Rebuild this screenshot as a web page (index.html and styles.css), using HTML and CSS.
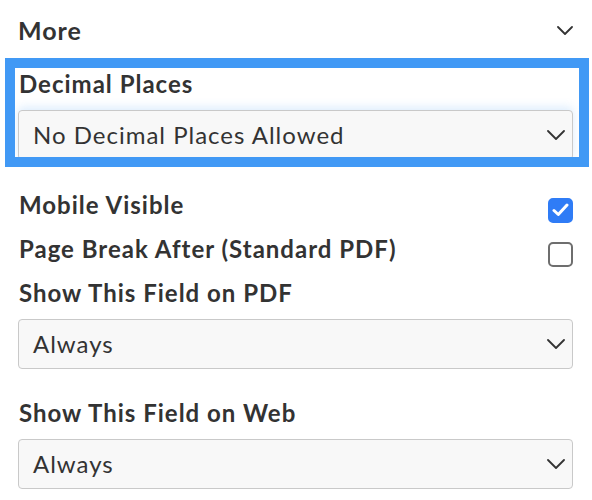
FILE: index.html
```html
<!DOCTYPE html>
<html>
<head>
<meta charset="utf-8">
<link rel="stylesheet" href="styles.css">
</head>
<body>
<div class="panel">
  <div class="section-head">
    <h2 class="section-title">More</h2>
    <svg class="head-chevron" width="16" height="9" viewBox="0 0 16 9"><path d="M1 1 L8 8 L15 1" fill="none" stroke="#333" stroke-width="1.8" stroke-linecap="round" stroke-linejoin="round"/></svg>
  </div>

  <div class="field field-focused">
    <div class="field-label">Decimal Places</div>
    <div class="select select-focused">
      <span>No Decimal Places Allowed</span>
      <svg class="select-chevron" width="18" height="10" viewBox="0 0 18 10"><path d="M1 1 L9 9 L17 1" fill="none" stroke="#333" stroke-width="1.8" stroke-linecap="round" stroke-linejoin="round"/></svg>
    </div>
  </div>

  <div class="check-row">
    <span class="check-label">Mobile Visible</span>
    <span class="checkbox checked"><svg width="17" height="14" viewBox="0 0 17 14"><path d="M2 7.5 L6.3 11.5 L15 2" fill="none" stroke="#fff" stroke-width="3" stroke-linecap="round" stroke-linejoin="round"/></svg></span>
  </div>
  <div class="check-row">
    <span class="check-label">Page Break After (Standard PDF)</span>
    <span class="checkbox"></span>
  </div>

  <div class="field field-pdf">
    <div class="field-label">Show This Field on PDF</div>
    <div class="select">
      <span>Always</span>
      <svg class="select-chevron" width="18" height="10" viewBox="0 0 18 10"><path d="M1 1 L9 9 L17 1" fill="none" stroke="#333" stroke-width="1.8" stroke-linecap="round" stroke-linejoin="round"/></svg>
    </div>
  </div>

  <div class="field field-web">
    <div class="field-label">Show This Field on Web</div>
    <div class="select">
      <span>Always</span>
      <svg class="select-chevron" width="18" height="10" viewBox="0 0 18 10"><path d="M1 1 L9 9 L17 1" fill="none" stroke="#333" stroke-width="1.8" stroke-linecap="round" stroke-linejoin="round"/></svg>
    </div>
  </div>
</div>
</body>
</html>
```
FILE: styles.css
```css
* { box-sizing: border-box; }
html, body { margin: 0; padding: 0; background: #fff; }
body {
  font-family: Lato, "Open Sans", "Liberation Sans", sans-serif;
  color: #333;
}
.panel {
  width: 592px;
  padding: 0 19px 0 18px;
}
.section-head {
  height: 58px;
  display: flex;
  align-items: center;
  justify-content: space-between;
}
.section-title {
  margin: 0;
  font-size: 25px;
  font-weight: 700;
  letter-spacing: 1px;
  line-height: 30px;
  padding-top: 1px;
  padding-left: 0;
}
.head-chevron { display: block; margin-top: 3px; }

.field { display: flex; flex-direction: column; }
.field-label {
  font-size: 24px;
  font-weight: 700;
  letter-spacing: 1px;
  line-height: 26px;
  margin-bottom: 13px;
  padding-left: 1px;
}
.field-focused {
  position: relative;
  margin-top: 13px;
}
.field-focused::after {
  content: "";
  position: absolute;
  left: -13px;
  right: -16px;
  top: -13px;
  bottom: -7px;
  border: 10px solid #4199f5;
  pointer-events: none;
}
.select {
  height: 50px;
  border: 1.5px solid #c9c9c9;
  border-radius: 4px;
  background: #f8f8f8;
  display: flex;
  align-items: center;
  justify-content: space-between;
  padding: 0 7px 0 14px;
  font-size: 24px;
  letter-spacing: 1px;
  line-height: 26px;
}
.select-focused {
  box-shadow: 0 -3px 10px rgba(65, 153, 245, 0.18);
}
.select-chevron { display: block; }

.check-row {
  height: 44px;
  display: flex;
  align-items: center;
  justify-content: space-between;
}
.field-focused + .check-row { margin-top: 28px; }
.check-label {
  font-size: 24px;
  font-weight: 700;
  letter-spacing: 1px;
  line-height: 26px;
  padding-bottom: 11px;
  padding-left: 1px;
}
.checkbox {
  width: 25px;
  height: 25px;
  border: 2px solid #6e6e6e;
  border-radius: 5px;
  display: flex;
  align-items: center;
  justify-content: center;
}
.checkbox.checked {
  background: #2f7cf6;
  border-color: #2f7cf6;
}
.checkbox svg { display: block; }
.field-pdf { margin-top: 4px; }
.field-web { margin-top: 31px; }
```
